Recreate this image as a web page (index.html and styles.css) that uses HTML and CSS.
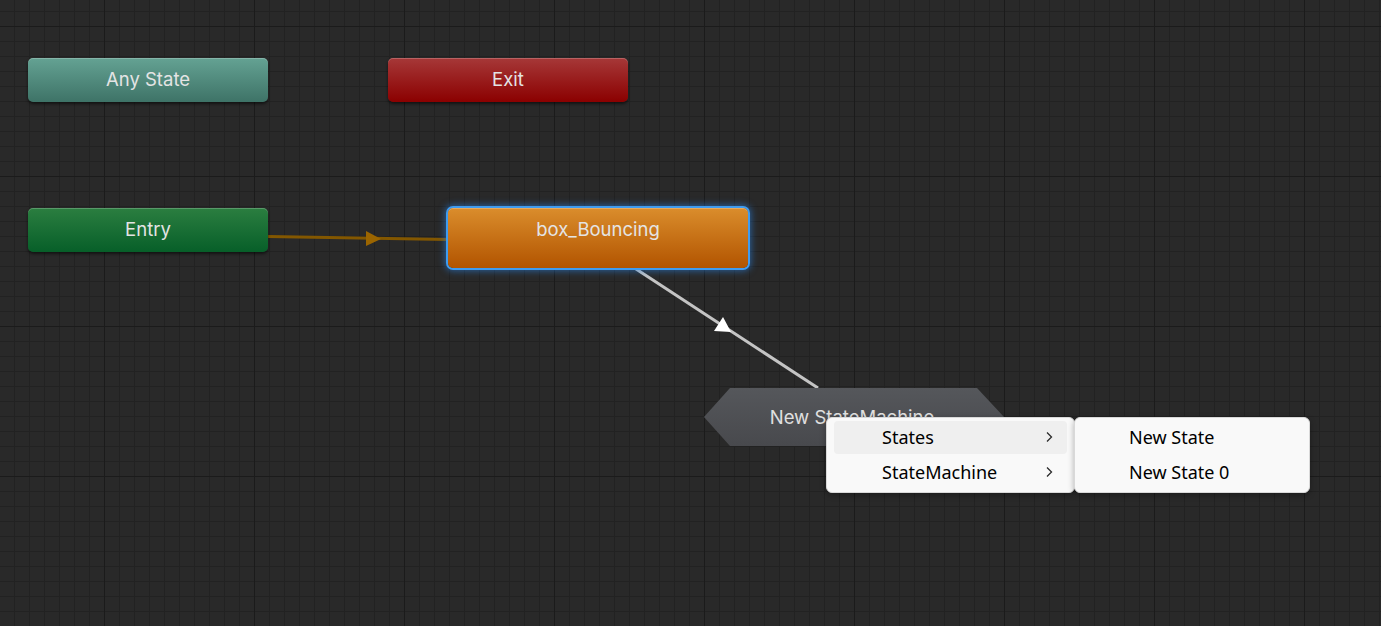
FILE: index.html
```html
<!DOCTYPE html>
<html lang="en">

<head>
    <meta charset="UTF-8">
    <meta name="viewport" content="width=device-width, initial-scale=1.0">
    <title>Animator</title>
    <link rel="stylesheet" href="styles.css">
</head>

<body>
    <div id="graph">
        <svg class="links" width="1381" height="626" viewBox="0 0 1381 626">
            <line x1="268" y1="236.5" x2="448" y2="239.5" stroke="#835700" stroke-width="3" />
            <polygon points="366,231 366,246 381,239" fill="#9b6500" />
            <line x1="633" y1="267" x2="818" y2="388" stroke="#c4c4c4" stroke-width="3" />
            <polygon points="723,317 714,331 731,332" fill="#ffffff" />
        </svg>

        <div class="node any-state" style="left: 28px; top: 58px;">Any State</div>
        <div class="node exit" style="left: 388px; top: 58px;">Exit</div>
        <div class="node entry" style="left: 28px; top: 208px;">Entry</div>
        <div class="node default selected" style="left: 448px; top: 208px;">box_Bouncing</div>
        <div class="machine" style="left: 704px; top: 388px;">
            <span>New StateMachine</span>
        </div>

        <div class="menu main-menu">
            <div class="item active">
                <span>States</span>
                <svg class="chevron" width="8" height="12" viewBox="0 0 8 12">
                    <polyline points="2,1.5 6.5,6 2,10.5" fill="none" stroke="#2b2b2b" stroke-width="1.3" />
                </svg>
            </div>
            <div class="item">
                <span>StateMachine</span>
                <svg class="chevron" width="8" height="12" viewBox="0 0 8 12">
                    <polyline points="2,1.5 6.5,6 2,10.5" fill="none" stroke="#2b2b2b" stroke-width="1.3" />
                </svg>
            </div>
        </div>

        <div class="menu sub-menu">
            <div class="item"><span>New State</span></div>
            <div class="item"><span>New State 0</span></div>
        </div>
    </div>
</body>

</html>
```

FILE: styles.css
```css
body {
    margin: 0;
    overflow: hidden;
    background-color: #282828;
}

#graph {
    position: relative;
    width: 1381px;
    height: 626px;
    overflow: hidden;
    background:
        linear-gradient(to right, #1b1b1b 1px, transparent 1px) 104px 0 / 150px 150px,
        linear-gradient(to bottom, #1b1b1b 1px, transparent 1px) 0 26px / 150px 150px,
        linear-gradient(to right, #222222 1px, transparent 1px) 14px 0 / 15px 15px,
        linear-gradient(to bottom, #222222 1px, transparent 1px) 0 11px / 15px 15px,
        #292929;
}

.links {
    position: absolute;
    left: 0;
    top: 0;
}

.node {
    position: absolute;
    box-sizing: border-box;
    width: 240px;
    height: 44px;
    line-height: 43px;
    border-radius: 5px;
    text-align: center;
    font-family: Inter, 'Noto Sans', sans-serif;
    font-size: 18.5px;
    color: #e4e4e4;
    box-shadow: inset 0 1px 0 rgba(255, 255, 255, 0.22), 0 2px 3px rgba(0, 0, 0, 0.55);
}

.any-state {
    background: linear-gradient(to bottom, #64a293, #3e7367);
}

.exit {
    background: linear-gradient(to bottom, #a63838, #8b0000);
}

.entry {
    background: linear-gradient(to bottom, #2b7e40, #075f29);
}

.default {
    width: 300px;
    height: 60px;
    background: linear-gradient(to bottom, #da8d2c, #b25400);
}

.selected {
    box-shadow: inset 0 1px 0 rgba(255, 255, 255, 0.25), 0 0 0 2px #3f9cf0, 0 0 7px 3px rgba(40, 130, 230, 0.6);
}

.machine {
    position: absolute;
    width: 300px;
    height: 58px;
    background: linear-gradient(to bottom, #55575b, #48494d);
    clip-path: polygon(0 50%, 26px 0, 273px 0, 100% 50%, 273px 100%, 26px 100%);
    display: flex;
    align-items: center;
    justify-content: center;
    padding-right: 4px;
    box-sizing: border-box;
    font-family: Inter, 'Noto Sans', sans-serif;
    font-size: 18.5px;
    color: #e0e0e0;
}

.menu {
    position: absolute;
    top: 417px;
    box-sizing: border-box;
    padding: 1px 7px 3px;
    background-color: #f9f9f9;
    border: 1px solid #d9d9d9;
    border-radius: 6px;
    box-shadow: 0 2px 6px rgba(0, 0, 0, 0.3);
    font-family: 'Noto Sans', 'Noto Sans CJK SC', sans-serif;
    font-size: 18px;
    color: #000;
}

.main-menu {
    left: 826px;
    width: 249px;
}

.sub-menu {
    left: 1074px;
    width: 236px;
}

.item {
    display: flex;
    align-items: center;
    justify-content: space-between;
    height: 35px;
    padding: 0 14px 0 48px;
    border-radius: 4px;
}

.sub-menu .item {
    padding-left: 47px;
}

.item.active {
    margin-top: 2px;
    height: 33px;
    padding-bottom: 2px;
    box-sizing: border-box;
    background-color: #efefef;
}

.chevron {
    display: block;
}
```
